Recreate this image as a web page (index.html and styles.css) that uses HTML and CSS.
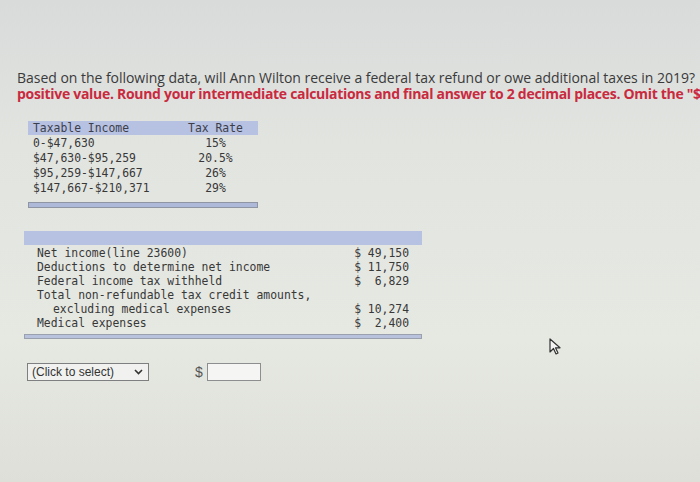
FILE: index.html
```html
<!DOCTYPE html>
<html>
<head>
<meta charset="utf-8">
<link rel="stylesheet" href="styles.css">
</head>
<body>
<div class="page">
  <div class="question">
    <p class="q-line">Based on the following data, will Ann Wilton receive a federal tax refund or owe additional taxes in 2019?</p>
    <p class="q-line q-red">positive value. Round your intermediate calculations and final answer to 2 decimal places. Omit the "$" sign in your response.</p>
  </div>

  <div class="rates">
    <div class="rates-head">
      <span class="c-inc">Taxable Income</span>
      <span class="c-rate">Tax Rate</span>
    </div>
    <div class="rates-row"><span class="c-inc">0-$47,630</span><span class="c-rate">15%</span></div>
    <div class="rates-row"><span class="c-inc">$47,630-$95,259</span><span class="c-rate">20.5%</span></div>
    <div class="rates-row"><span class="c-inc">$95,259-$147,667</span><span class="c-rate">26%</span></div>
    <div class="rates-row"><span class="c-inc">$147,667-$210,371</span><span class="c-rate">29%</span></div>
    <div class="rates-foot"></div>
  </div>

  <div class="data">
    <div class="data-head"></div>
    <div class="data-body">
      <div class="data-row"><span>Net income(line 23600)</span><span class="amt">$ 49,150</span></div>
      <div class="data-row"><span>Deductions to determine net income</span><span class="amt">$ 11,750</span></div>
      <div class="data-row"><span>Federal income tax withheld</span><span class="amt">$&nbsp;&nbsp;6,829</span></div>
      <div class="data-row"><span>Total non-refundable tax credit amounts,</span><span class="amt"></span></div>
      <div class="data-row"><span class="indent">excluding medical expenses</span><span class="amt">$ 10,274</span></div>
      <div class="data-row"><span>Medical expenses</span><span class="amt">$&nbsp;&nbsp;2,400</span></div>
    </div>
    <div class="data-foot"></div>
  </div>

  <div class="answer">
    <div class="select">
      <span>(Click to select)</span>
      <svg class="chev" width="9" height="6" viewBox="0 0 9 6"><path d="M1 1 L4.5 4.5 L8 1" fill="none" stroke="#333" stroke-width="1.6"/></svg>
    </div>
    <span class="dollar">$</span>
    <div class="input"></div>
  </div>

  <svg class="cursor" width="14" height="18" viewBox="0 0 14 18"><path d="M1 1 L1 14 L4.5 10.5 L7 16 L9 15 L6.5 9.8 L11 9.8 Z" fill="#f4f4f4" stroke="#333" stroke-width="1.2" stroke-linejoin="round"/></svg>
</div>
</body>
</html>
```

FILE: styles.css
```css
html, body {
  margin: 0;
  padding: 0;
}
body {
  width: 700px;
  height: 482px;
  overflow: hidden;
  background: linear-gradient(180deg, #d9dbdb 0%, #e2e4e0 30%, #e6e8e2 70%, #dedfd9 100%);
}
.page {
  position: relative;
  width: 700px;
  height: 482px;
  padding-top: 70px;
  box-sizing: border-box;
}
.question {
  padding-left: 17px;
  overflow: hidden;
  width: 683px;
}
.q-line {
  margin: 0;
  white-space: nowrap;
  font-family: "Open Sans", sans-serif;
  font-size: 14px;
  line-height: 16px;
  color: #3a3a3a;
  letter-spacing: -0.03px;
}
.q-red {
  color: #c92a3e;
  font-weight: 700;
  letter-spacing: -0.3px;
}
.rates {
  margin: 19px 0 0 28px;
  width: 230px;
  font-family: "DejaVu Sans Mono", monospace;
  font-size: 11.4px;
  color: #383838;
}
.rates-head, .rates-row {
  display: flex;
  height: 15px;
  line-height: 15px;
}
.rates-head {
  background: #b7c1e2;
  color: #3c3f4a;
  height: 14px;
  line-height: 14px;
  margin-bottom: 1px;
}
.c-inc {
  width: 145px;
  padding-left: 5px;
}
.c-rate {
  width: 75px;
  text-align: center;
}
.rates-foot {
  margin-top: 6px;
  height: 4px;
  background: #aeb8d8;
  border: 1px solid #8f95a3;
}
.data {
  margin: 23px 0 0 24px;
  width: 398px;
  font-family: "DejaVu Sans Mono", monospace;
  font-size: 11.4px;
  color: #383838;
}
.data-head {
  height: 14px;
  background: #b7c1e2;
}
.data-body {
  padding: 1px 13px 0 13px;
}
.data-row {
  display: flex;
  justify-content: space-between;
  height: 14px;
  line-height: 14px;
}
.indent {
  padding-left: 16px;
}
.amt {
  white-space: pre;
}
.data-foot {
  margin-top: 4px;
  height: 3px;
  background: #b9c2dc;
  border: 1px solid #9aa0ad;
}
.answer {
  display: flex;
  align-items: center;
  margin: 24px 0 0 27px;
}
.select {
  display: flex;
  align-items: center;
  justify-content: space-between;
  width: 111px;
  height: 16px;
  padding: 0 5px 0 4px;
  border: 1px solid #7d7f80;
  background: #f1f2ef;
  font-family: "Liberation Sans", Arial, sans-serif;
  font-size: 12px;
  color: #333;
}
.dollar {
  margin-left: 46px;
  font-family: "Liberation Sans", Arial, sans-serif;
  font-size: 14px;
  color: #555;
}
.input {
  margin-left: 4px;
  width: 52px;
  height: 16px;
  border: 1px solid #8c8e8f;
  background: #f5f6f3;
}
.cursor {
  position: absolute;
  left: 549px;
  top: 338px;
}
```
